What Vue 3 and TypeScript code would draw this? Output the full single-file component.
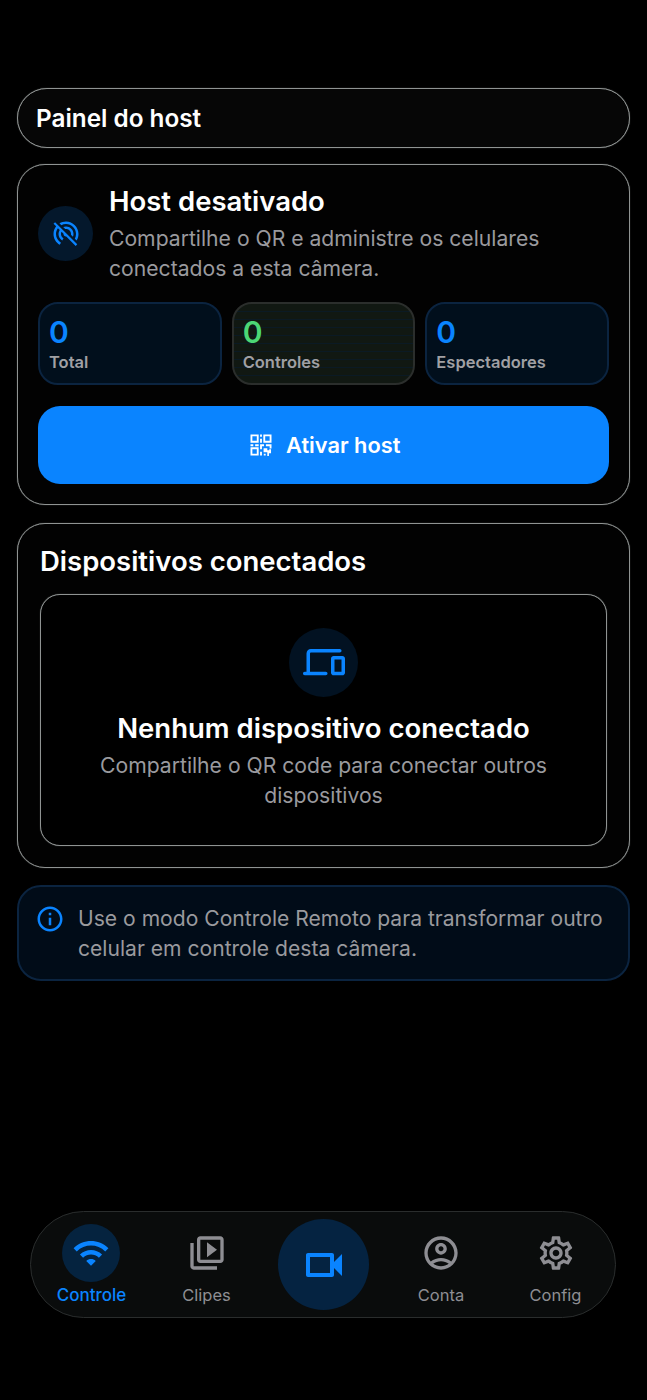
<template>
  <div class="page">
    <header class="topbar">Painel do host</header>

    <section class="card host">
      <div class="host-head">
        <div class="round-icon small">
          <svg viewBox="0 0 24 24" width="30" height="30"><path :d="icons.wifiOff" /></svg>
        </div>
        <div class="host-text">
          <h2>Host desativado</h2>
          <p>Compartilhe o QR e administre os celulares conectados a esta câmera.</p>
        </div>
      </div>
      <div class="stats">
        <div v-for="s in stats" :key="s.label" class="stat" :class="s.kind">
          <strong>{{ s.value }}</strong>
          <span>{{ s.label }}</span>
        </div>
      </div>
      <button class="primary">
        <svg viewBox="0 0 24 24" width="28" height="28"><path :d="icons.qr" /></svg>
        Ativar host
      </button>
    </section>

    <section class="card devices">
      <h2>Dispositivos conectados</h2>
      <div class="empty">
        <div class="round-icon big">
          <svg viewBox="0 0 24 24" width="42" height="42"><path :d="icons.devices" /></svg>
        </div>
        <h3>Nenhum dispositivo conectado</h3>
        <p>Compartilhe o QR code para conectar outros dispositivos</p>
      </div>
    </section>

    <div class="tip">
      <svg viewBox="0 0 24 24" width="30" height="30"><path :d="icons.info" /></svg>
      <p>Use o modo Controle Remoto para transformar outro celular em controle desta câmera.</p>
    </div>

    <nav class="tabbar">
      <div v-for="t in leftTabs" :key="t.label" class="tab" :class="{ active: t.active }">
        <div class="tab-icon"><svg viewBox="0 0 24 24" :width="t.size" :height="t.size"><path :d="t.icon" /></svg></div>
        <span>{{ t.label }}</span>
      </div>
      <div class="record">
        <svg viewBox="0 0 24 24" width="48" height="48"><path :d="icons.video" /></svg>
      </div>
      <div v-for="t in rightTabs" :key="t.label" class="tab">
        <div class="tab-icon"><svg viewBox="0 0 24 24" :width="t.size" :height="t.size"><path :d="t.icon" /></svg></div>
        <span>{{ t.label }}</span>
      </div>
    </nav>
  </div>
</template>

<script setup lang="ts">
const icons = {
  wifiOff:
    'M17.56 14.24c.28-.69.44-1.45.44-2.24 0-3.31-2.69-6-6-6-.79 0-1.55.16-2.24.44l1.62 1.62c.2-.03.41-.06.62-.06 2.21 0 4 1.79 4 4 0 .21-.02.42-.05.63l1.61 1.61zM12 4c4.42 0 8 3.58 8 8 0 1.35-.35 2.62-.95 3.74l1.47 1.47C21.46 15.69 22 13.91 22 12c0-5.52-4.48-10-10-10-1.91 0-3.69.55-5.21 1.47l1.46 1.46C9.37 4.34 10.65 4 12 4zM3.27 2.5L2 3.77l2.1 2.1C2.79 7.57 2 9.69 2 12c0 3.7 2.01 6.92 4.99 8.65l1-1.73C5.61 17.53 4 14.96 4 12c0-1.76.57-3.38 1.53-4.69l1.43 1.44C6.36 9.68 6 10.8 6 12c0 2.22 1.21 4.15 3 5.19l1-1.74c-1.19-.7-2-1.97-2-3.45 0-.65.17-1.25.44-1.79l1.58 1.58L10 12c0 1.1.9 2 2 2l.21-.02 7.52 7.52L21 20.23 4.27 3.5l-1-1z',
  qr: 'M3 3h7v7H3V3zm1.6 1.6v3.8h3.8V4.6H4.6zM14 3h7v7h-7V3zm1.6 1.6v3.8h3.8V4.6h-3.8zM3 14h7v7H3v-7zm1.6 1.6v3.8h3.8v-3.8H4.6zM11.2 3h1.6v2h-1.6V3zm0 3.6h1.6V10h-1.6V6.6zM3 11.4h2.4V13H3v-1.6zm4 0h3V13H7v-1.6zm4.2 0h3.4V13h-1.8v2.6h-1.6v-4.2zm5 0H21V15h-1.6v-2h-3.2v-1.6zm-2 3.4h3.2v1.8h1.6v-1h1.6v3.4h-1.8v2.4H17.4v-3.2h-3.2v-3.4zm-3 3h1.6V21h-1.6v-3.2zm3.2 1.8h1.6V21h-1.6v-1.4z',
  devices:
    'M4 6.5c0-.3.2-.5.5-.5H21c.6 0 1-.4 1-1s-.4-1-1-1H4.5C3.1 4 2 5.1 2 6.5V17H1c-.6 0-1 .4-1 1s.4 1 1 1h12c.6 0 1-.4 1-1s-.4-1-1-1H4V6.5zM22.5 8h-5c-.8 0-1.5.7-1.5 1.5v8c0 .8.7 1.5 1.5 1.5h5c.8 0 1.5-.7 1.5-1.5v-8c0-.8-.7-1.5-1.5-1.5zM22 17h-4v-7h4v7z',
  info: 'M11 7h2v2h-2zm0 4h2v6h-2zm1-9C6.48 2 2 6.48 2 12s4.48 10 10 10 10-4.48 10-10S17.52 2 12 2zm0 18c-4.41 0-8-3.59-8-8s3.59-8 8-8 8 3.59 8 8-3.59 8-8 8z',
  wifi: 'M1 9l2 2c4.97-4.97 13.03-4.97 18 0l2-2C16.93 2.93 7.08 2.93 1 9zm8 8l3 3 3-3c-1.65-1.66-4.34-1.66-6 0zm-4-4l2 2c2.76-2.76 7.24-2.76 10 0l2-2C15.14 9.14 8.87 9.14 5 13z',
  clips:
    'M4 6H2v14c0 1.1.9 2 2 2h14v-2H4V6zm16-4H8c-1.1 0-2 .9-2 2v12c0 1.1.9 2 2 2h12c1.1 0 2-.9 2-2V4c0-1.1-.9-2-2-2zm0 14H8V4h12v12zM12 5.5v9l6-4.5z',
  video:
    'M15 8v8H5V8h10m1-2H4c-.55 0-1 .45-1 1v10c0 .55.45 1 1 1h12c.55 0 1-.45 1-1v-3.5l4 4v-11l-4 4V7c0-.55-.45-1-1-1z',
  account:
    'M12 2C6.48 2 2 6.48 2 12s4.48 10 10 10 10-4.48 10-10S17.52 2 12 2zM7.35 18.5C8.66 17.56 10.26 17 12 17s3.34.56 4.65 1.5C15.34 19.44 13.74 20 12 20s-3.34-.56-4.65-1.5zm10.79-1.38C16.45 15.8 14.32 15 12 15s-4.45.8-6.14 2.12C4.7 15.73 4 13.95 4 12c0-4.42 3.58-8 8-8s8 3.58 8 8c0 1.95-.7 3.73-1.86 5.12zM12 6c-1.93 0-3.5 1.57-3.5 3.5S10.07 13 12 13s3.5-1.57 3.5-3.5S13.93 6 12 6zm0 5c-.83 0-1.5-.67-1.5-1.5S11.17 8 12 8s1.5.67 1.5 1.5S12.83 11 12 11z',
  gear: 'M19.43 12.98c.04-.32.07-.64.07-.98 0-.34-.03-.66-.07-.98l2.11-1.65c.19-.15.24-.42.12-.64l-2-3.46c-.09-.16-.26-.25-.44-.25-.06 0-.12.01-.17.03l-2.49 1c-.52-.4-1.08-.73-1.69-.98l-.38-2.65C14.46 2.18 14.25 2 14 2h-4c-.25 0-.46.18-.49.42l-.38 2.65c-.61.25-1.17.59-1.69.98l-2.49-1c-.06-.02-.12-.03-.18-.03-.17 0-.34.09-.43.25l-2 3.46c-.13.22-.07.49.12.64l2.11 1.65c-.04.32-.07.65-.07.98 0 .33.03.66.07.98l-2.11 1.65c-.19.15-.24.42-.12.64l2 3.46c.09.16.26.25.44.25.06 0 .12-.01.17-.03l2.49-1c.52.4 1.08.73 1.69.98l.38 2.65c.03.24.24.42.49.42h4c.25 0 .46-.18.49-.42l.38-2.65c.61-.25 1.17-.59 1.69-.98l2.49 1c.06.02.12.03.18.03.17 0 .34-.09.43-.25l2-3.46c.12-.22.07-.49-.12-.64l-2.11-1.65zm-1.98-1.71c.04.31.05.52.05.73 0 .21-.02.43-.05.73l-.14 1.13.89.7 1.08.84-.7 1.21-1.27-.51-1.04-.42-.9.68c-.43.32-.84.56-1.25.73l-1.06.43-.16 1.13-.2 1.35h-1.4l-.19-1.35-.16-1.13-1.06-.43c-.43-.18-.83-.41-1.23-.71l-.91-.7-1.06.43-1.27.51-.7-1.21 1.08-.84.89-.7-.14-1.13c-.03-.31-.05-.54-.05-.74s.02-.43.05-.73l.14-1.13-.89-.7-1.08-.84.7-1.21 1.27.51 1.04.42.9-.68c.43-.32.84-.56 1.25-.73l1.06-.43.16-1.13.2-1.35h1.39l.19 1.35.16 1.13 1.06.43c.43.18.83.41 1.23.71l.91.7 1.06-.43 1.27-.51.7 1.21-1.07.85-.89.7.14 1.13zM12 8c-2.21 0-4 1.79-4 4s1.79 4 4 4 4-1.79 4-4-1.79-4-4-4zm0 6c-1.1 0-2-.9-2-2s.9-2 2-2 2 .9 2 2-.9 2-2 2z',
}

const stats = [
  { label: 'Total', value: 0, kind: 'blue' },
  { label: 'Controles', value: 0, kind: 'green' },
  { label: 'Espectadores', value: 0, kind: 'blue' },
]

const leftTabs = [
  { label: 'Controle', icon: icons.wifi, size: 38, active: true },
  { label: 'Clipes', icon: icons.clips, size: 40, active: false },
]
const rightTabs = [
  { label: 'Conta', icon: icons.account, size: 40 },
  { label: 'Config', icon: icons.gear, size: 40 },
]
</script>

<style>
html,
body {
  background: #000;
}
</style>

<style scoped>
.page {
  position: relative;
  box-sizing: border-box;
  height: 1400px;
  padding: 88px 17px 0;
  display: flex;
  flex-direction: column;
  font-family: Inter, 'Liberation Sans', sans-serif;
  color: #fff;
  background: #000;
}
h2,
h3,
p {
  margin: 0;
}
svg path {
  fill: currentColor;
}
.topbar {
  box-sizing: border-box;
  height: 60px;
  padding: 0 18px;
  display: flex;
  align-items: center;
  border: 1px solid #8f9392;
  box-shadow: 0 0 1px #6f7372;
  border-radius: 30px;
  background: #060606;
  font-size: 24.3px;
  font-weight: 600;
}
.card {
  box-sizing: border-box;
  border: 1px solid #8f9392;
  box-shadow: 0 0 1px #6f7372;
  border-radius: 28px;
  background: #020202;
}
.host {
  margin-top: 16px;
  height: 341px;
  padding: 19px 20px;
}
.host-head {
  display: flex;
  align-items: center;
  gap: 16px;
}
.round-icon {
  flex: none;
  display: flex;
  align-items: center;
  justify-content: center;
  border-radius: 50%;
  color: #0a84ff;
}
.round-icon.small {
  width: 55px;
  height: 55px;
  margin-top: -1px;
  background: #04182c;
}
.round-icon.big {
  width: 69px;
  height: 69px;
  background: #021222;
}
.host-text h2 {
  font-size: 27.5px;
  font-weight: 600;
  line-height: 34px;
}
.host-text p {
  margin-top: 6px;
  font-size: 21.15px;
  line-height: 30px;
  color: #9a9a9e;
}
.stats {
  margin-top: 18px;
  display: grid;
  grid-template-columns: repeat(3, 1fr);
  gap: 10px;
}
.stat {
  box-sizing: border-box;
  height: 83px;
  padding: 9px;
  display: flex;
  flex-direction: column;
  border-radius: 20px;
  border: 2px solid #0b2440;
  background: #010f1c;
}
.stat.green {
  border-color: #2b2e2c;
  background: repeating-linear-gradient(180deg, #111812 0 7px, #0b1a24 7px 8px);
}
.stat strong {
  font-size: 30px;
  font-weight: 600;
  line-height: 38px;
  color: #0a84ff;
}
.stat.green strong {
  color: #4cd775;
}
.stat span {
  font-size: 16.5px;
  font-weight: 600;
  line-height: 22px;
  color: #a0a0a4;
}
.primary {
  margin-top: 21px;
  width: 100%;
  height: 78px;
  display: flex;
  align-items: center;
  justify-content: center;
  gap: 11.5px;
  border: 0;
  border-radius: 22px;
  background: #0a84ff;
  color: #fff;
  font-family: inherit;
  font-size: 21.8px;
  font-weight: 600;
}
.devices {
  margin-top: 18px;
  height: 345px;
  padding: 20px 22px;
}
.devices h2 {
  font-size: 27.5px;
  font-weight: 600;
  line-height: 34px;
}
.empty {
  box-sizing: border-box;
  margin-top: 16px;
  height: 252px;
  padding-top: 33px;
  display: flex;
  flex-direction: column;
  align-items: center;
  text-align: center;
  border: 1px solid #8f9392;
  box-shadow: 0 0 1px #6f7372;
  border-radius: 20px;
  background: #000;
}
.empty h3 {
  margin-top: 14px;
  font-size: 27.5px;
  font-weight: 600;
  line-height: 34px;
}
.empty p {
  margin-top: 6px;
  padding: 0 40px;
  font-size: 21.15px;
  line-height: 30px;
  color: #9a9a9e;
}
.tip {
  box-sizing: border-box;
  margin-top: 17px;
  height: 96px;
  padding: 2px 20px 0 16px;
  display: flex;
  align-items: center;
  gap: 13px;
  border: 2px solid #0b2440;
  border-radius: 24px;
  background: #010c18;
  color: #0a84ff;
}
.tip svg {
  flex: none;
  margin-top: -30px;
}
.tip p {
  font-size: 21.1px;
  line-height: 30px;
  color: #9a9a9e;
}
.tabbar {
  position: absolute;
  left: 30px;
  top: 1211px;
  box-sizing: border-box;
  width: 586px;
  height: 107px;
  display: grid;
  grid-template-columns: 121px 109px 125px 110px 119px;
  align-items: center;
  justify-items: center;
  border: 1px solid #2a2d2d;
  border-radius: 54px;
  background: #0a0c0c;
}
.tab {
  padding-top: 1px;
  display: flex;
  flex-direction: column;
  align-items: center;
  color: #8e8e93;
  font-size: 16.5px;
  line-height: 22px;
}
.tab-icon {
  width: 58px;
  height: 58px;
  margin-bottom: 2px;
  display: flex;
  align-items: center;
  justify-content: center;
  border-radius: 50%;
}
.tab.active {
  color: #0a84ff;
  font-size: 17px;
  font-weight: 500;
}
.tab.active .tab-icon {
  background: #05233f;
}
.record {
  width: 91px;
  height: 91px;
  display: flex;
  align-items: center;
  justify-content: center;
  border-radius: 50%;
  background: #052341;
  color: #0a84ff;
}
</style>
